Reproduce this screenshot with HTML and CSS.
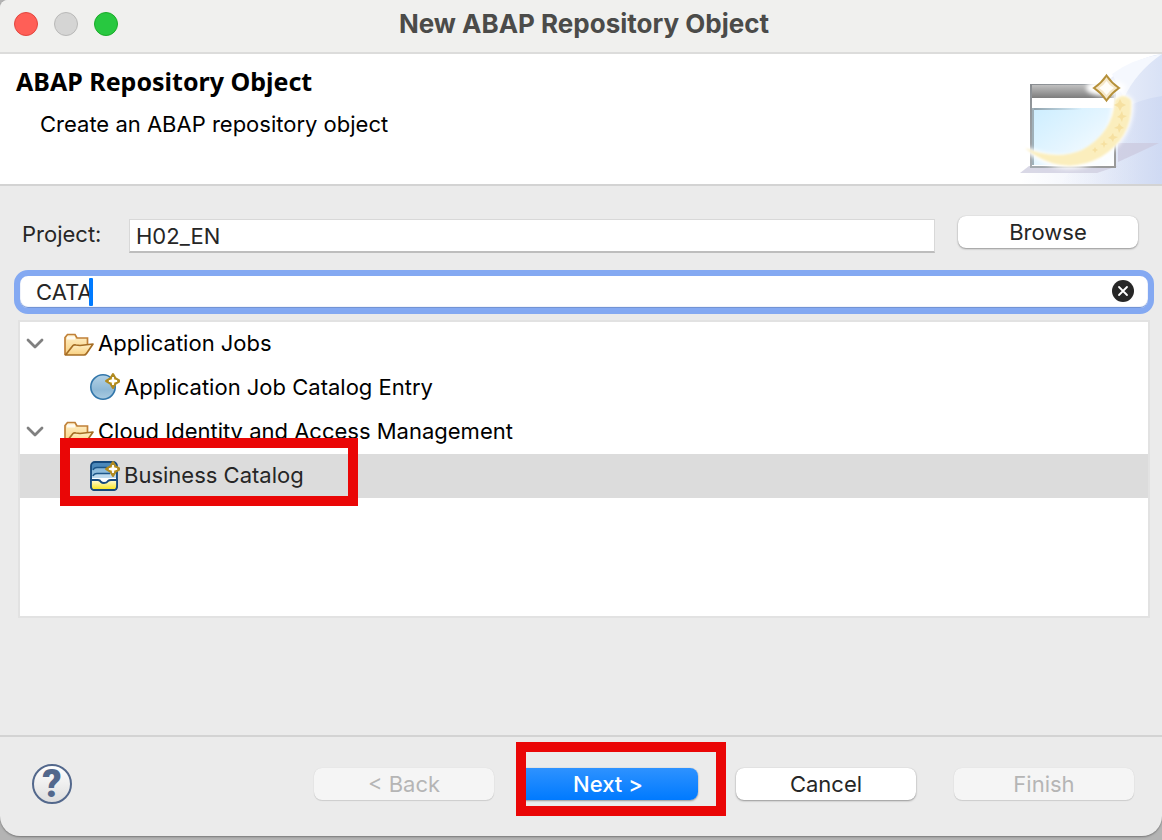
FILE: index.html
```html
<!DOCTYPE html>
<html lang="en">
<head>
<meta charset="utf-8">
<title>New ABAP Repository Object</title>
<link rel="stylesheet" href="styles.css">
</head>
<body>
<svg class="defs" aria-hidden="true">
  <defs>
    <linearGradient id="folderFill" x1="0" y1="0" x2="0" y2="1"><stop offset="0" stop-color="#fff0c8"/><stop offset="1" stop-color="#f8d080"/></linearGradient>
    <linearGradient id="ballFill" x1="0" y1="0" x2="0" y2="1"><stop offset="0" stop-color="#b4d2e6"/><stop offset=".6" stop-color="#8fb9d6"/><stop offset="1" stop-color="#a9cbe1"/></linearGradient>
    <linearGradient id="drawerFill" x1="0" y1="0" x2="0" y2="1"><stop offset="0" stop-color="#fffde0"/><stop offset="1" stop-color="#f8e412"/></linearGradient>
    <symbol id="folder" viewBox="0 0 30 24">
      <path d="M1 22V4.500L3.500 1.500H11L13 5H23.500V12" fill="url(#folderFill)" stroke="#c08038" stroke-width="1.700"/>
      <path d="M3 5h8" stroke="#fffaf0" stroke-width="3"/>
      <path d="M1.500 22L9 12.500Q10 11.500 12 12L16 12.500L29 11L22.500 20.500Q21.500 22 20 22Z" fill="url(#folderFill)" stroke="#a56d24" stroke-width="1.700" stroke-linejoin="round"/>
    </symbol>
    <symbol id="spark" viewBox="0 0 14 14">
      <path d="M7 1L9 4.500L13 7L9 9.500L7 13L5 9.500L1 7L5 4.500Z" fill="#f3dc90" stroke="#b08a20" stroke-width="1.900" stroke-linejoin="round"/>
      <path d="M7 3.500v7M3.500 7h7" stroke="#fff" stroke-width="1.600"/>
    </symbol>
    <symbol id="chevron" viewBox="0 0 18 12"><path d="M2 3L9 10L16 3" fill="none" stroke="#808080" stroke-width="2.800" stroke-linecap="round" stroke-linejoin="round"/></symbol>
  </defs>
</svg>
<main class="window">
  <header class="titlebar">
    <div class="lights">
      <button class="light light-close" aria-label="Close"></button>
      <button class="light light-min" aria-label="Minimize" disabled></button>
      <button class="light light-zoom" aria-label="Zoom"></button>
    </div>
    <h1 class="title">New ABAP Repository Object</h1>
  </header>
  <section class="banner">
    <div class="banner-text">
      <h2 class="banner-title">ABAP Repository Object</h2>
      <p class="banner-desc">Create an ABAP repository object</p>
    </div>
    <svg class="banner-art" viewBox="0 0 142 130" aria-hidden="true">
      <defs>
        <linearGradient id="sky" x1="0" y1="0" x2="1" y2="0"><stop offset="0" stop-color="#fff"/><stop offset=".5" stop-color="#f0f3fb"/><stop offset="1" stop-color="#d9e2f6"/></linearGradient>
        <linearGradient id="bar" x1="0" y1="0" x2="0" y2="1"><stop offset="0" stop-color="#c0c0c0"/><stop offset="1" stop-color="#7d7d7d"/></linearGradient>
        <linearGradient id="pane" x1="0" y1="0" x2="1" y2="1"><stop offset="0" stop-color="#cdeeff"/><stop offset=".5" stop-color="#e4f5ff"/><stop offset="1" stop-color="#fff"/></linearGradient>
        <linearGradient id="frame" x1="0" y1="0" x2="1" y2="1"><stop offset="0" stop-color="#898d91"/><stop offset=".5" stop-color="#a5abb0"/><stop offset="1" stop-color="#999"/></linearGradient>
        <linearGradient id="haze" x1="0" y1="0" x2="1" y2="0"><stop offset="0" stop-color="#c6d2ef" stop-opacity="0"/><stop offset="1" stop-color="#c0cdee" stop-opacity=".4"/></linearGradient>
        <linearGradient id="rim" x1="0" y1="0" x2="1" y2="0"><stop offset="0" stop-color="#8fa0aa"/><stop offset="1" stop-color="#8fa0aa" stop-opacity="0"/></linearGradient>
        <filter id="glow" x="-30%" y="-30%" width="160%" height="160%"><feGaussianBlur stdDeviation="2"/></filter>
        <filter id="soft" x="-20%" y="-20%" width="140%" height="140%"><feGaussianBlur stdDeviation="1"/></filter>
      </defs>
      <path d="M0 130L30 80L84 30Q112 4 142 0V130Z" fill="url(#sky)"/>
      <path d="M92 20Q112 5 142 0Q116 18 104 44Z" fill="#f5f8fe"/>
      <path d="M100 56Q120 45 142 42V130H40Z" fill="url(#haze)"/>
      <path d="M98 89H139Q120 98 98 108Z" fill="#cccbe0" opacity=".8"/>
      <path d="M0 119L9 112H98L77 119Z" fill="#d0cee0" opacity=".8"/>
      <rect x="11" y="31" width="84" height="82" fill="#fff" stroke="url(#frame)" stroke-width="2"/>
      <rect x="12" y="31" width="82" height="13" fill="url(#bar)"/>
      <rect x="14" y="54" width="80" height="57" fill="url(#pane)"/>
      <rect x="12" y="54" width="50" height="2" fill="url(#rim)"/>
      <rect x="12" y="54" width="2" height="57" fill="#9fb0b9"/>
      <ellipse cx="86" cy="34" rx="20" ry="8" fill="#fff" filter="url(#glow)"/>
      <path d="M6 95Q43 111 70 98Q96 82 94 45Q103 38 111 48Q112 83 79 104Q43 124 6 95Z" fill="#fff" stroke="#fff" stroke-width="5" filter="url(#glow)"/>
      <path d="M5 94Q36 107 62 96Q93 79 95 46Q103 38 111 46Q114 82 81 103Q42 124 5 94Z" fill="#fbeebd" filter="url(#soft)"/>
      <g fill="#f6e0a0"><path d="M100 45l2 4 4 2-4 2-2 4-2-4-4-2 4-2zM102 57l1 4 4 1-4 2-1 4-2-4-3-1 3-2zM99 69l2 3 3 2-3 1-2 4-1-4-4-1 4-2zM93 79l1 3 4 1-4 2-1 3-2-3-3-1 3-2zM84 86l1 3 3 1-3 1-1 3-1-3-3-1 3-1zM75 93l1 2 2 1-2 1-1 2-1-2-2-1 2-1z"/></g>
      <path d="M86.500 21.500Q91.500 29 99 34Q91.500 39 86.500 46.500Q81.500 39 74 34Q81.500 29 86.500 21.500Z" fill="#f6e8ca" stroke="#b5903a" stroke-width="2"/>
      <path d="M86.500 27Q89 31 94 34Q89 37 86.500 41Q84 37 79 34Q84 31 86.500 27Z" fill="#fffdf8"/>
    </svg>
  </section>
  <section class="content">
    <div class="project">
      <label class="label" for="project">Project:</label>
      <input class="project-input" id="project" type="text" value="H02_EN">
      <button class="button">Browse</button>
    </div>
    <div class="search">
      <input class="search-input" type="text" value="CATA" aria-label="Filter objects">
      <span class="caret"></span>
      <button class="clear" aria-label="Clear filter">
        <svg viewBox="0 0 22 22"><circle cx="11" cy="11" r="11" fill="#262626"/><path d="M7 7l8 8M15 7l-8 8" stroke="#fff" stroke-width="1.800" stroke-linecap="round"/></svg>
      </button>
    </div>
    <ul class="tree" role="tree">
      <li class="row" role="treeitem" aria-expanded="true"><svg class="chevron"><use href="#chevron"/></svg><svg class="icon icon-folder"><use href="#folder"/></svg>Application Jobs</li>
      <li class="row row-child" role="treeitem">
        <svg class="icon" viewBox="0 0 30 28"><circle cx="13" cy="14" r="12.200" fill="url(#ballFill)" stroke="#3276aa" stroke-width="1.600"/><use href="#spark" x="15" y="0" width="16" height="16"/></svg>Application Job Catalog Entry</li>
      <li class="row" role="treeitem" aria-expanded="true"><svg class="chevron"><use href="#chevron"/></svg><svg class="icon icon-folder"><use href="#folder"/></svg>Cloud Identity and Access Management</li>
      <li class="row row-child row-selected" role="treeitem" aria-selected="true">
        <svg class="icon icon-tall" viewBox="0 0 30 32">
          <rect x="1" y="3" width="26" height="28" rx="4" fill="#4b88ba" stroke="#16497c" stroke-width="1.800"/>
          <path d="M2 16V12Q2 9 6 9H26V16Z" fill="#8ebbdc"/>
          <path d="M2 22V18Q2 15 6 15H26V22Z" fill="#bcd9ee"/>
          <path d="M3 11Q4 8.500 7 8.500H17M3 17Q4 14.500 7 14.500H20" fill="none" stroke="#1d5688" stroke-width="1.400"/>
          <path d="M2 21H8Q10 21 11 23Q12 24 14 24Q17 24 18 22Q19 21 21 21H26V19H2Z" fill="#fff"/>
          <path d="M1 21H8Q10 21 11 23Q12 24 14 24Q17 24 18 22Q19 21 21 21H27V27Q27 31 24 31H4Q1 31 1 27Z" fill="url(#drawerFill)" stroke="#16497c" stroke-width="1.800"/>
          <use href="#spark" x="15" y="2" width="16" height="16"/>
        </svg>Business Catalog
        <span class="mark mark-row"></span>
      </li>
    </ul>
  </section>
  <footer class="footer">
    <button class="help" aria-label="Help">?</button>
    <div class="actions">
      <button class="button" disabled>&lt; Back</button>
      <div class="next"><button class="button button-primary">Next &gt;</button><span class="mark mark-next"></span></div>
      <button class="button">Cancel</button>
      <button class="button" disabled>Finish</button>
    </div>
  </footer>
</main>
</body>
</html>
```
FILE: styles.css
```css
* { box-sizing: border-box; }
body {
  margin: 0;
  min-height: 100vh;
  padding-bottom: 4px;
  display: flex;
  background: #b4b4b4;
  font-family: Inter, "Liberation Sans", sans-serif;
  font-size: 22px;
  line-height: 28px;
  color: #262626;
}
button, input { font: inherit; color: inherit; }
h1, h2, p, ul { margin: 0; padding: 0; }
.defs { position: absolute; width: 0; height: 0; }
.window {
  flex: 1;
  min-width: 0;
  display: flex;
  flex-direction: column;
  background: #ebebeb;
  border-radius: 8px 0 20px 20px;
  overflow: hidden;
  box-shadow: 0 1px 2px #777;
}
.titlebar {
  display: grid;
  grid-template-columns: 1fr auto 1fr;
  align-items: center;
  height: 54px;
  padding: 0 8px 4px 14px;
  background: #f0f0ee;
  border-bottom: 2px solid #dcdcdb;
}
.lights { display: flex; gap: 16px; }
.light { width: 24px; height: 24px; padding: 0; border: 1px solid; border-radius: 50%; }
.light-close { background: #ff5f57; border-color: #e2463f; }
.light-min { background: #d5d5d4; border-color: #b9b9b8; }
.light-zoom { background: #28c840; border-color: #1aab29; }
.title { font-size: 26px; font-weight: 700; color: #4b4b49; }
.banner {
  display: flex;
  justify-content: space-between;
  background: #fff;
  border-bottom: 2px solid #d3d3d3;
  color: #000;
}
.banner-text { padding: 11px 0 0 16px; }
.banner-title { font: 700 25px/32px "Noto Sans", "Open Sans", sans-serif; }
.banner-desc { padding: 13px 0 0 24px; }
.banner-art { width: 142px; height: 130px; flex: none; }
.content { flex: 1; padding: 29px 12px 20px 14px; }
.project { display: flex; align-items: flex-start; padding: 0 12px 0 8px; }
.label { width: 107px; padding-top: 5px; }
.project-input {
  flex: 1;
  min-width: 0;
  height: 34px;
  margin: 4px 23px 0 0;
  padding: 0 6px;
  border: 1px solid #d8d8d8;
  border-bottom: 2px solid #bdbdbd;
  background: #fff;
}
.button {
  width: 180px;
  height: 32px;
  padding: 0;
  border: 0;
  border-radius: 8px;
  background: #fff;
  box-shadow: 0 1px 2px rgba(0, 0, 0, .35), 0 0 1px rgba(0, 0, 0, .2);
}
.project .button { margin-top: 1px; }
.button:disabled {
  background: #f5f5f5;
  color: #b5b5b5;
  box-shadow: 0 1px 1px rgba(0, 0, 0, .12), 0 0 1px rgba(0, 0, 0, .12);
}
.button-primary { background: linear-gradient(#2e92ff, #007aff); color: #fff; font-weight: 500; }
.search {
  position: relative;
  display: flex;
  align-items: center;
  height: 44px;
  margin: 17px -4px 0 0;
  padding: 0 14px 0 16px;
  border: 6px solid #84a9f2;
  border-radius: 14px;
  background: #fff;
  box-shadow: inset 0 -1px 1px #6388d0;
}
.search-input { flex: 1; min-width: 0; padding: 0; border: 0; outline: 0; background: none; }
.caret { position: absolute; left: 69px; top: 2px; width: 4px; height: 28px; border-radius: 1px; background: #007aff; }
.clear { width: 22px; height: 22px; padding: 0; border: 0; margin-bottom: 2px; background: none; }
.clear svg { display: block; width: 22px; height: 22px; }
.tree {
  height: 298px;
  margin: 6px 0 0 4px;
  border: 2px solid #e2e2e2;
  background: #fff;
  list-style: none;
  color: #000;
}
.row { position: relative; display: flex; align-items: center; height: 44px; padding: 0 0 2px 6px; }
.row-child { padding-left: 70px; }
.row-selected { background: #dcdcdc; color: #262626; }
.chevron { width: 18px; height: 12px; margin-right: 20px; }
.icon { width: 30px; height: 28px; margin-right: 4px; flex: none; }
.icon-folder { height: 24px; margin-top: 4px; }
.icon-tall { height: 32px; }
.mark { position: absolute; border: 10px solid #ea0606; pointer-events: none; }
.mark-row { left: 40px; top: -16px; width: 298px; height: 68px; }
.footer {
  display: flex;
  align-items: center;
  justify-content: space-between;
  height: 101px;
  padding: 0 28px 6px 32px;
  border-top: 2px solid #d3d3d3;
}
.help {
  width: 40px;
  height: 40px;
  padding: 0;
  border: 2px solid #53688c;
  border-radius: 50%;
  background: linear-gradient(#fff, #dedede);
  color: #53688c;
  font: 900 38px/36px Roboto, "Liberation Sans", sans-serif;
}
.actions { display: flex; gap: 38px; }
.next { position: relative; margin-left: -14px; display: flex; }
.mark-next { left: -2px; top: -26px; width: 210px; height: 74px; }
```
